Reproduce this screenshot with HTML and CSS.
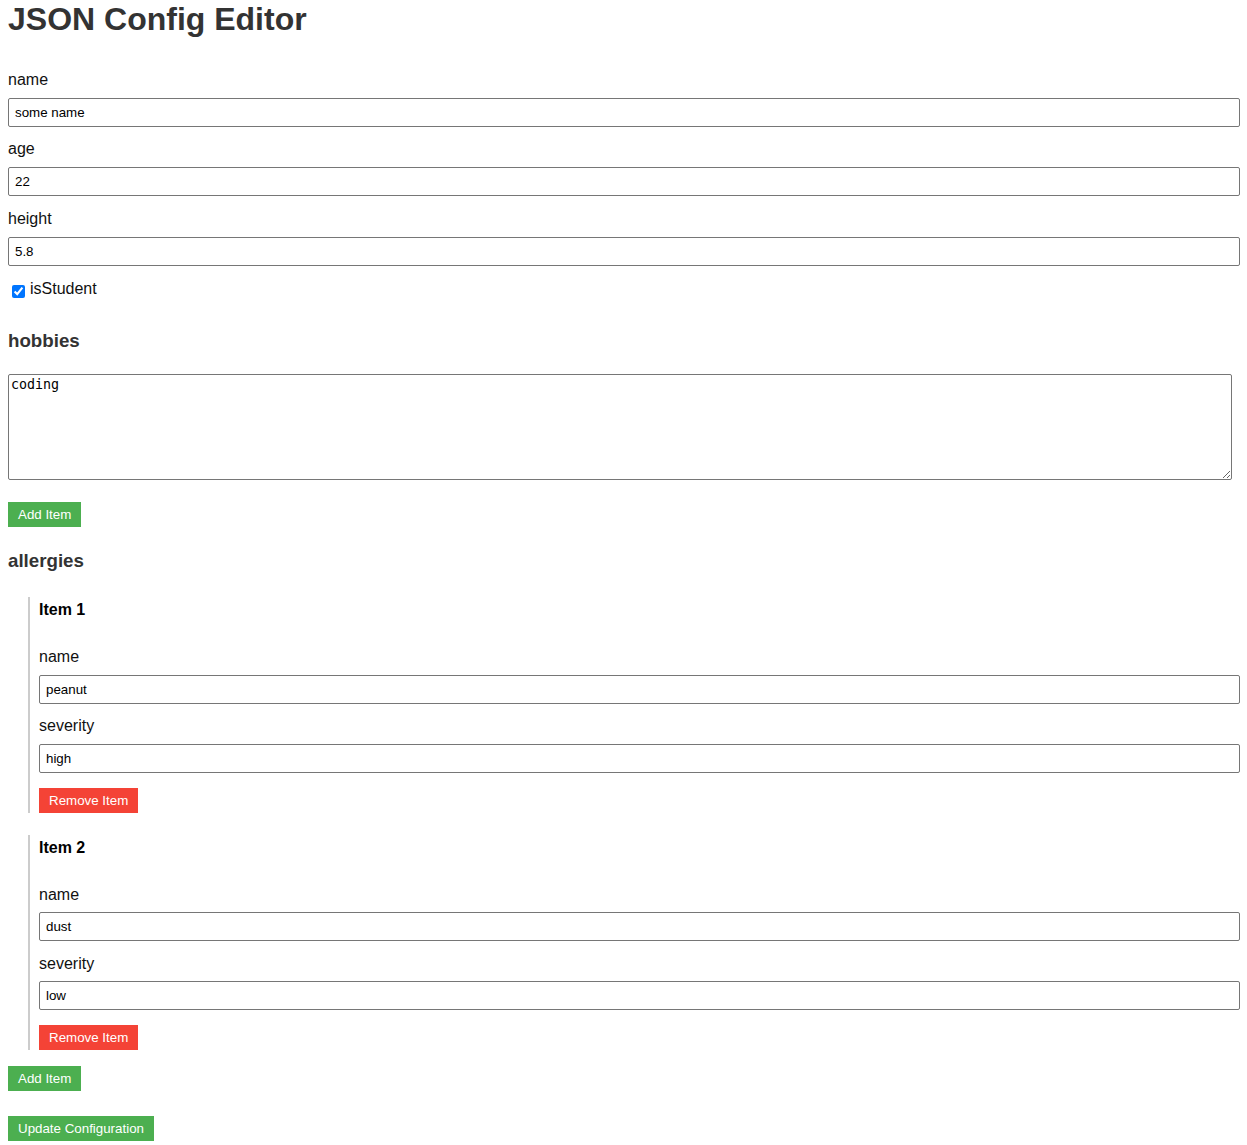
FILE: index.html
```html
<!DOCTYPE html>
<html lang="en">
<head>
<meta charset="utf-8">
<title>JSON Config Editor</title>
<link rel="stylesheet" href="styles.css">
</head>
<body>
<h1 class="title">JSON Config Editor</h1>
<form class="editor">
  <div class="field">
    <label class="field-label">name</label>
    <input class="text-input" type="text" value="some name">
  </div>
  <div class="field">
    <label class="field-label">age</label>
    <input class="text-input" type="text" value="22">
  </div>
  <div class="field">
    <label class="field-label">height</label>
    <input class="text-input" type="text" value="5.8">
  </div>
  <div class="field check-row">
    <input class="check" type="checkbox" checked>
    <label class="check-label">isStudent</label>
  </div>

  <div class="array-field">
    <h3 class="array-title">hobbies</h3>
    <div class="array-text">
      <textarea class="text-area">coding</textarea>
    </div>
    <div class="btn-row">
      <button type="button" class="btn btn-add">Add Item</button>
    </div>
  </div>

  <div class="array-field">
    <h3 class="array-title">allergies</h3>
    <div class="item">
      <h4 class="item-title">Item 1</h4>
      <div class="field">
        <label class="field-label">name</label>
        <input class="text-input" type="text" value="peanut">
      </div>
      <div class="field">
        <label class="field-label">severity</label>
        <input class="text-input" type="text" value="high">
      </div>
      <div class="btn-row remove-row">
        <button type="button" class="btn btn-remove">Remove Item</button>
      </div>
    </div>
    <div class="item">
      <h4 class="item-title">Item 2</h4>
      <div class="field">
        <label class="field-label">name</label>
        <input class="text-input" type="text" value="dust">
      </div>
      <div class="field">
        <label class="field-label">severity</label>
        <input class="text-input" type="text" value="low">
      </div>
      <div class="btn-row remove-row">
        <button type="button" class="btn btn-remove">Remove Item</button>
      </div>
    </div>
    <div class="btn-row">
      <button type="button" class="btn btn-add">Add Item</button>
    </div>
  </div>

  <div class="btn-row submit-row">
    <button type="button" class="btn btn-add">Update Configuration</button>
  </div>
</form>
</body>
</html>
```

FILE: styles.css
```css
html, body {
  margin: 0;
  padding: 0;
}

body {
  padding: 0 8px 4px;
  font-family: "Liberation Sans", Arial, sans-serif;
  font-size: 16px;
  color: #000;
  background: #fff;
}

.title {
  font-size: 32px;
  font-weight: bold;
  color: #333;
  margin: 1px 0 32.5px;
}

.field {
  margin-bottom: 13.5px;
}

.field-label {
  display: block;
  margin-bottom: 9px;
  color: #111;
}

.text-input {
  display: block;
  box-sizing: border-box;
  width: calc(100% + 1px);
  height: 29px;
  margin: 0;
  padding: 6px;
  border: 1px solid #767676;
  border-radius: 2px;
  font-family: "Liberation Sans", Arial, sans-serif;
  font-size: 13.333px;
  color: #000;
  background: #fff;
}

.item .field {
  margin-bottom: 13.4px;
}

.item .field-label {
  margin-bottom: 8.7px;
}

.check-row {
  display: flex;
  align-items: flex-start;
  margin-bottom: 31.5px;
}

.check {
  width: 13px;
  height: 13px;
  margin: 6px 5px 0 4px;
}

.check-label {
  color: #111;
  margin-top: 1px;
}

.array-field {
  margin-bottom: 23.4px;
}

.array-title {
  font-size: 18.72px;
  font-weight: bold;
  color: #333;
  margin: 18.72px 0 22.3px;
}

.array-text {
  margin-bottom: 22.3px;
}

.text-area {
  display: block;
  box-sizing: border-box;
  width: calc(100% - 7px);
  height: 105.8px;
  margin: 0;
  padding: 2px;
  border: 1px solid #767676;
  border-radius: 2px;
  font-family: "DejaVu Sans Mono", "Liberation Mono", monospace;
  font-size: 13.333px;
  color: #000;
  resize: both;
}

.btn-row {
  display: flex;
}

.btn {
  margin: 0;
  border: none;
  padding: 5px 10px;
  height: 25px;
  font-family: "Liberation Sans", Arial, sans-serif;
  font-size: 13.333px;
  line-height: 15px;
  color: #fff;
  cursor: pointer;
}

.btn-add {
  background: #4caf50;
}

.btn-remove {
  background: #f44336;
}

.item {
  margin: 25px 0 15.5px 20px;
  padding: 4px 0 0 9px;
  border-left: 2px solid #ccc;
}

.item + .item {
  margin-top: 21.8px;
}

.item-title {
  font-size: 16px;
  font-weight: bold;
  color: #000;
  margin: 0 0 29.1px;
}

.remove-row {
  padding-top: 1.3px;
}

.submit-row {
  margin-top: 25px;
}
```
